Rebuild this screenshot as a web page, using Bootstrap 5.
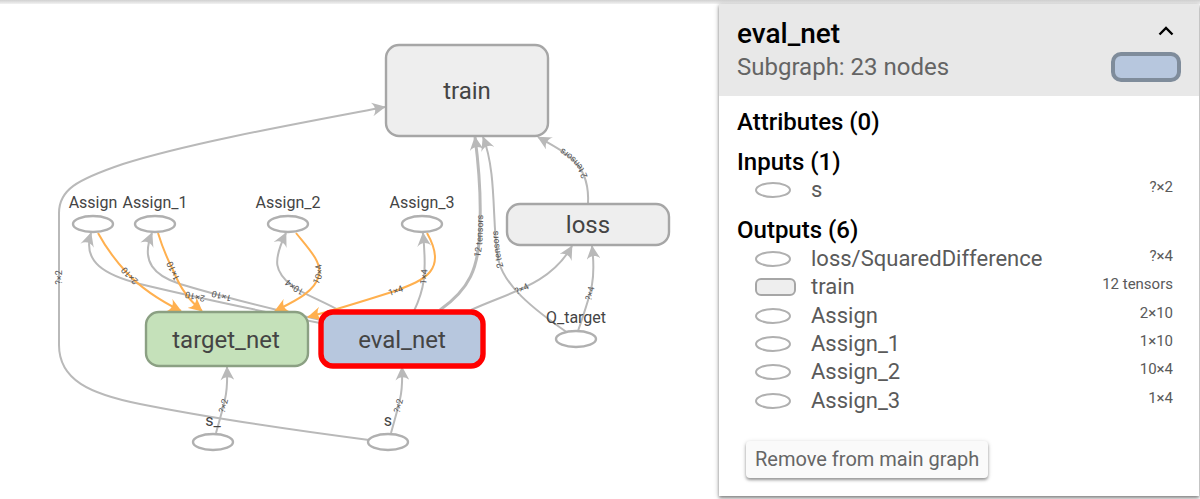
<!DOCTYPE html>
<html lang="en">
<head>
<meta charset="utf-8">
<meta name="viewport" content="width=device-width, initial-scale=1">
<title>Graph: eval_net</title>
<link href="https://cdn.jsdelivr.net/npm/bootstrap@5.3.0/dist/css/bootstrap.min.css" rel="stylesheet">
<style>
  body { font-family: Roboto, sans-serif; color: #000; background: #fff; }
  .top-shade { height: 4px; background: linear-gradient(#d0d0d0, #f2f2f2); }
  .graph-pane { min-width: 0; }
  .graph-pane svg { width: 100%; height: auto; }

  .edge { fill: none; stroke: #b9b9b9; stroke-width: 2; marker-end: url(#arrow); }
  .edge-wide { stroke-width: 3; }
  .edge-ref { stroke: #ffb04f; marker-end: none; marker-start: url(#arrow-ref); }
  .edge-text { font-size: 9px; fill: #555; text-anchor: middle; }
  .node-text { font-size: 24px; fill: #444; text-anchor: middle; }
  .op-text { font-size: 16px; fill: #444; text-anchor: middle; }
  .op-shape { fill: #fff; stroke: #b0b0b0; stroke-width: 2.4; }
  .group-shape { fill: #eee; stroke: #a6a6a6; stroke-width: 2.4; }
  .group-target { fill: #c5e1ba; stroke: #8ba083; }
  .group-selected { fill: #b7c7de; stroke: #f00; stroke-width: 5.4; }

  .info-panel { flex: 0 0 40%; box-shadow: 0 2px 3px rgba(0,0,0,.4), 0 1px 6px rgba(0,0,0,.2); margin-right: 1px; margin-bottom: 3px; }
  .info-head { background: #e8e8e8; padding: 12px 18px 14px; }
  .info-title { font-size: 28px; line-height: 36px; font-weight: 500; }
  .info-sub { font-size: 24px; line-height: 30px; color: #646464; }
  .toggle-btn { width: 30px; height: 30px; }
  .swatch { width: 70px; height: 30px; border: 4px solid #7f8c9b; border-radius: 10px; background: #b7c7de; }
  .info-body { padding: 12px 18px 18px; }
  .info-h { font-size: 24px; line-height: 28px; font-weight: 500; }
  .io-list { display: grid; grid-auto-rows: 1fr; padding: 0 8px 0 18px; margin: 0 0 12px; font-size: 22px; line-height: 28px; color: #5a5a5a; }
  .io-outputs { min-height: 171px; padding-top: 1px; margin-bottom: 26px; }
  .io-list a { color: inherit; }
  .io-icon { width: 56px; }
  .io-value { font-size: 15px; line-height: 22px; }
  .remove-btn { margin-left: 9px; padding: 0 9px; font-size: 20px; line-height: 37px; color: #666; background: #fafafa; border-radius: 4px; box-shadow: 0 2px 3px rgba(0,0,0,.35), 0 1px 5px rgba(0,0,0,.15); }
</style>
</head>
<body>
<div class="top-shade"></div>
<main class="d-flex align-items-start">
  <section class="graph-pane flex-fill" aria-label="Main graph">
    <svg class="d-block" viewBox="0 4 719 495" role="img" aria-label="Model graph">
      <defs>
        <marker id="arrow" markerUnits="userSpaceOnUse" markerWidth="14" markerHeight="14" viewBox="0 0 10 10" refX="9.500" refY="5" orient="auto"><path d="M0,0 L10,5 L0,10 C3,7 3,3 0,0" fill="#b9b9b9"/></marker>
        <marker id="arrow-ref" markerUnits="userSpaceOnUse" markerWidth="14" markerHeight="14" viewBox="0 0 10 10" refX="9.500" refY="5" orient="auto-start-reverse"><path d="M0,0 L10,5 L0,10 C3,7 3,3 0,0" fill="#ffb04f"/></marker>
      </defs>

      <g>
        <path id="e-s-train" class="edge" d="M369,440 C300,431 210,418 140,404 C90,394 59,380 59,345 L59,213 C59,190 76,180 123,164 C190,143 290,125 385,107"/>
        <path id="e-assign" class="edge" d="M330,325 C270,313 190,296 140,284 C105,275 82,262 91,233"/>
        <path id="e-assign1" class="edge" d="M330,322 C270,309 220,296 180,284 C155,276 140,262 152,233"/>
        <path id="e-assign2" class="edge" d="M340,311 C325,302 305,295 292,286 C275,272 272,262 286,233"/>
        <path id="e-assign3" class="edge" d="M414,311 C424,290 427,275 423,233"/>
        <path id="e-eval-train" class="edge edge-wide" d="M440,310 C468,290 480,270 480,223 C481,195 478,160 475,137"/>
        <path id="e-q-train" class="edge" d="M568,333 C530,307 505,285 499,262 C491,230 498,175 483,137"/>
        <path id="e-q-loss" class="edge" d="M578,331 C592,290 596,280 592,246"/>
        <path id="e-eval-loss" class="edge" d="M471,310 C510,292 550,285 572,246"/>
        <path id="e-loss-train" class="edge" d="M588,204 C590,165 570,155 538,137"/>
        <path id="e-s-target" class="edge" d="M216,433 C225,400 228,395 227,367"/>
        <path id="e-s-eval" class="edge" d="M391,433 C400,400 403,395 402,367"/>
        <path id="r-assign" class="edge edge-ref" d="M181,311 C155,298 140,287 127,273 C115,260 105,246 98,233"/>
        <path id="r-assign1" class="edge edge-ref" d="M202,311 C184,296 178,282 172,268 C167,258 162,246 158,233"/>
        <path id="r-assign2" class="edge edge-ref" d="M275,311 C295,301 315,292 319,275 C322,262 308,248 296,233"/>
        <path id="r-assign3" class="edge edge-ref" d="M308,317 C335,310 370,299 395,291 C425,280 448,270 427,233"/>
      </g>

      <g class="edge-text">
        <text dy="3" dx="-5"><textPath href="#e-s-train" startOffset="50%">?×2</textPath></text>
        <text dy="3"><textPath href="#e-assign" startOffset="50%">2×10</textPath></text>
        <text dy="3"><textPath href="#e-assign1" startOffset="50%">1×10</textPath></text>
        <text dy="3"><textPath href="#e-assign2" startOffset="45%">10×4</textPath></text>
        <text dy="3"><textPath href="#e-assign3" startOffset="45%">1×4</textPath></text>
        <text dy="3"><textPath href="#e-eval-train" startOffset="47%">12 tensors</textPath></text>
        <text dy="3"><textPath href="#e-q-train" startOffset="50%">2 tensors</textPath></text>
        <text dy="3"><textPath href="#e-q-loss" startOffset="45%">?×4</textPath></text>
        <text dy="3"><textPath href="#e-eval-loss" startOffset="45%">?×4</textPath></text>
        <text dy="3"><textPath href="#e-loss-train" startOffset="50%">2 tensors</textPath></text>
        <text dy="3"><textPath href="#e-s-target" startOffset="42%">?×2</textPath></text>
        <text dy="3"><textPath href="#e-s-eval" startOffset="42%">?×2</textPath></text>
        <text dy="3"><textPath href="#r-assign" startOffset="54%">2×10</textPath></text>
        <text dy="3"><textPath href="#r-assign1" startOffset="55%">1×10</textPath></text>
        <text dy="3"><textPath href="#r-assign2" startOffset="55%">10×4</textPath></text>
        <text dy="3"><textPath href="#r-assign3" startOffset="53%">1×4</textPath></text>
      </g>

      <g class="group-shape">
        <rect x="386" y="45" width="162" height="91" rx="13"/>
        <rect x="507" y="204" width="162" height="41" rx="13"/>
        <rect x="146" y="312" width="162" height="54" rx="13" class="group-target"/>
        <rect x="321" y="312" width="162" height="54" rx="12" class="group-selected"/>
      </g>
      <g class="node-text">
        <text x="467" y="99">train</text>
        <text x="588" y="233">loss</text>
        <text x="226" y="348">target_net</text>
        <text x="402" y="348">eval_net</text>
      </g>
      <g class="op-shape">
        <ellipse cx="93" cy="224" rx="20" ry="8"/>
        <ellipse cx="155" cy="224" rx="20" ry="8"/>
        <ellipse cx="288" cy="224" rx="20" ry="8"/>
        <ellipse cx="422" cy="224" rx="20" ry="8"/>
        <ellipse cx="576" cy="339" rx="20" ry="8"/>
        <ellipse cx="213" cy="442" rx="20" ry="8"/>
        <ellipse cx="388" cy="442" rx="20" ry="8"/>
      </g>
      <g class="op-text">
        <text x="93" y="208">Assign</text>
        <text x="155" y="208">Assign_1</text>
        <text x="288" y="208">Assign_2</text>
        <text x="422" y="208">Assign_3</text>
        <text x="576" y="323">Q_target</text>
        <text x="213" y="426">s_</text>
        <text x="388" y="426">s</text>
      </g>
    </svg>
  </section>

  <aside class="info-panel bg-white">
    <header class="info-head d-flex justify-content-between">
      <div>
        <h1 class="info-title m-0">eval_net</h1>
        <div class="info-sub">Subgraph: 23 nodes</div>
      </div>
      <div class="d-flex flex-column align-items-end justify-content-between">
        <button type="button" class="toggle-btn btn p-0 border-0 d-flex align-items-center justify-content-center" aria-label="Collapse">
          <svg width="30" height="30" viewBox="0 0 30 30" fill="none" stroke="#000" stroke-width="2.4"><path d="M8.500 18.500L15 12L21.500 18.500"/></svg>
        </button>
        <div class="swatch"></div>
      </div>
    </header>
    <div class="info-body">
      <h2 class="info-h mb-0">Attributes (0)</h2>
      <h2 class="info-h mb-0 mt-2 pt-1">Inputs (1)</h2>
      <ul class="io-list list-unstyled">
        <li class="d-flex"><span class="io-icon d-flex align-items-center"><svg width="36" height="18"><ellipse cx="18" cy="9" rx="17" ry="7" fill="#fff" stroke="#b0b0b0" stroke-width="2"/></svg></span><a href="#" class="text-decoration-none flex-fill">s</a><span class="io-value">?×2</span></li>
      </ul>
      <h2 class="info-h mb-0">Outputs (6)</h2>
      <ul class="io-list io-outputs list-unstyled">
        <li class="d-flex"><span class="io-icon d-flex align-items-center"><svg width="36" height="18"><ellipse cx="18" cy="9" rx="17" ry="7" fill="#fff" stroke="#b0b0b0" stroke-width="2"/></svg></span><a href="#" class="text-decoration-none flex-fill">loss/SquaredDifference</a><span class="io-value">?×4</span></li>
        <li class="d-flex"><span class="io-icon d-flex align-items-center"><svg width="42" height="18"><rect x="1" y="1" width="39" height="16" rx="5" fill="#eee" stroke="#a6a6a6" stroke-width="2"/></svg></span><a href="#" class="text-decoration-none flex-fill">train</a><span class="io-value">12 tensors</span></li>
        <li class="d-flex"><span class="io-icon d-flex align-items-center"><svg width="36" height="18"><ellipse cx="18" cy="9" rx="17" ry="7" fill="#fff" stroke="#b0b0b0" stroke-width="2"/></svg></span><a href="#" class="text-decoration-none flex-fill">Assign</a><span class="io-value">2×10</span></li>
        <li class="d-flex"><span class="io-icon d-flex align-items-center"><svg width="36" height="18"><ellipse cx="18" cy="9" rx="17" ry="7" fill="#fff" stroke="#b0b0b0" stroke-width="2"/></svg></span><a href="#" class="text-decoration-none flex-fill">Assign_1</a><span class="io-value">1×10</span></li>
        <li class="d-flex"><span class="io-icon d-flex align-items-center"><svg width="36" height="18"><ellipse cx="18" cy="9" rx="17" ry="7" fill="#fff" stroke="#b0b0b0" stroke-width="2"/></svg></span><a href="#" class="text-decoration-none flex-fill">Assign_2</a><span class="io-value">10×4</span></li>
        <li class="d-flex"><span class="io-icon d-flex align-items-center"><svg width="36" height="18"><ellipse cx="18" cy="9" rx="17" ry="7" fill="#fff" stroke="#b0b0b0" stroke-width="2"/></svg></span><a href="#" class="text-decoration-none flex-fill">Assign_3</a><span class="io-value">1×4</span></li>
      </ul>
      <button type="button" class="remove-btn btn border-0">Remove from main graph</button>
    </div>
  </aside>
</main>
<script src="https://cdn.jsdelivr.net/npm/bootstrap@5.3.0/dist/js/bootstrap.bundle.min.js"></script>
</body>
</html>
